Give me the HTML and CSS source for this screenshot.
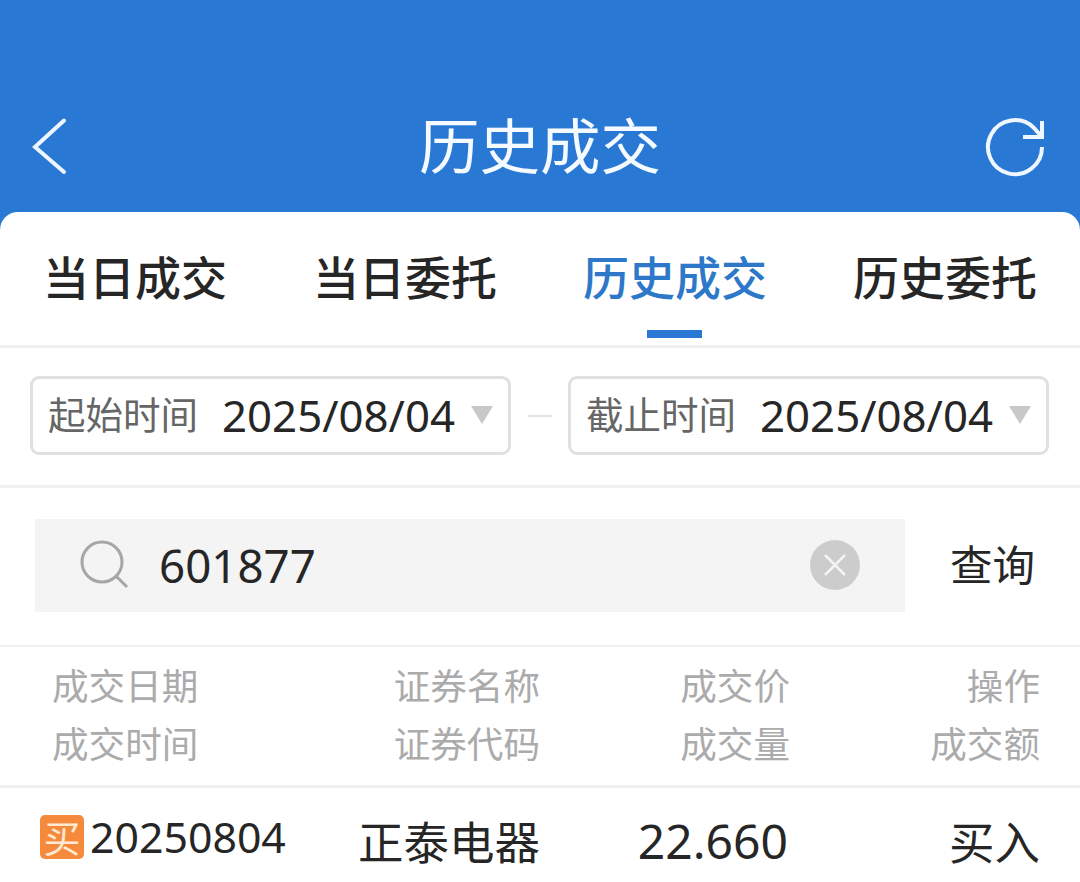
FILE: index.html
```html
<!DOCTYPE html>
<html lang="zh-CN">
<head>
<meta charset="utf-8">
<title>历史成交</title>
<link rel="stylesheet" href="styles.css">
</head>
<body>
<div class="page">
  <header class="topbar">
    <svg class="top-icon" viewBox="0 0 60 60"><path d="M34 3.500 L5 30 L34 55" fill="none" stroke="#eef6ff" stroke-width="4" stroke-linecap="round"/></svg>
    <h1 class="title">历史成交</h1>
    <svg class="top-icon" viewBox="0 0 60 60"><path d="M57 30 A27 27 0 1 1 48.500 10.500 L57 20" fill="none" stroke="#eef6ff" stroke-width="4"/><path d="M57 4 V20 H38" fill="none" stroke="#eef6ff" stroke-width="4"/></svg>
  </header>
  <main class="card">
    <nav class="tabs">
      <div class="tab"><span class="tab-label">当日成交</span></div>
      <div class="tab"><span class="tab-label">当日委托</span></div>
      <div class="tab active"><span class="tab-label">历史成交</span><span class="tab-bar"></span></div>
      <div class="tab"><span class="tab-label">历史委托</span></div>
    </nav>
    <section class="dates">
      <div class="date-box"><span class="date-label">起始时间</span><span class="date-value">2025/08/04</span><span class="caret"></span></div>
      <span class="dash"></span>
      <div class="date-box"><span class="date-label">截止时间</span><span class="date-value">2025/08/04</span><span class="caret"></span></div>
    </section>
    <section class="search">
      <div class="search-box">
        <svg class="search-icon" viewBox="0 0 50 50"><circle cx="22" cy="22" r="20" fill="none" stroke="#a6a6a6" stroke-width="3"/><path d="M36 36 L47 47" stroke="#a6a6a6" stroke-width="3"/></svg>
        <span class="search-text">601877</span>
        <svg class="clear-icon" viewBox="0 0 50 50"><circle cx="25" cy="25" r="25" fill="#cccccc"/><path d="M15 15 L35 35 M35 15 L15 35" stroke="#f4f4f4" stroke-width="2.500"/></svg>
      </div>
      <span class="query">查询</span>
    </section>
    <section class="head-row">
      <div class="cell first">成交日期<br>成交时间</div>
      <div class="cell">证券名称<br>证券代码</div>
      <div class="cell">成交价<br>成交量</div>
      <div class="cell">操作<br>成交额</div>
    </section>
    <section class="data-row">
      <div class="date-cell"><span class="badge">买</span><span class="trade-date">20250804</span></div>
      <div class="value">正泰电器</div>
      <div class="value num">22.660</div>
      <div class="value">买入</div>
    </section>
  </main>
</div>
</body>
</html>
```

FILE: styles.css
```css
* { box-sizing: border-box; }
html, body { margin: 0; padding: 0; }
body {
  background: #2878d4;
  font-family: "Noto Sans", "Noto Sans CJK SC", sans-serif;
  color: #262626;
  overflow: hidden;
}
.page { width: 1080px; height: 882px; display: flex; flex-direction: column; overflow: hidden; }
.topbar {
  height: 212px;
  flex: none;
  padding: 97px 35px 0 30px;
  display: flex;
  justify-content: space-between;
  align-items: flex-start;
}
.top-icon { width: 60px; height: 60px; margin-top: 20px; flex: none; }
.title {
  margin: 0 0 0 5px;
  font-family: "Noto Sans CJK SC", sans-serif;
  font-size: 60.500px;
  line-height: 92px;
  font-weight: 400;
  color: #f4faff;
}
.card { flex: 1; background: #fff; border-radius: 18px 18px 0 0; display: flex; flex-direction: column; }
.tabs {
  height: 136px;
  flex: none;
  display: grid;
  grid-template-columns: repeat(4, 270px);
  border-bottom: 3px solid #f0f0f0;
}
.tab { display: flex; flex-direction: column; align-items: center; padding-top: 32px; }
.tab-label {
  font-family: "Noto Sans CJK SC", sans-serif;
  font-size: 46px;
  line-height: 62px;
  font-weight: 500;
  color: #262626;
}
.active .tab-label { color: #2d78c8; }
.tab-bar { width: 55px; height: 8px; margin: 24px 1px 0 0; background: #2878d4; }
.dates {
  height: 140px;
  flex: none;
  padding: 28px 31px 0 30px;
  display: flex;
  align-items: flex-start;
  border-bottom: 3px solid #f0f0f0;
}
.date-box {
  width: 481px;
  height: 79px;
  flex: none;
  border: 3px solid #e0e0e0;
  border-radius: 9px;
  padding: 0 15px;
  display: flex;
  align-items: center;
}
.date-label {
  font-family: "Noto Sans CJK SC", sans-serif;
  font-size: 37.500px;
  line-height: 50px;
  margin-top: -5px;
  color: #666;
  width: 174px;
  flex: none;
}
.date-value { font-size: 43.800px; line-height: 60px; margin-top: -1px; color: #262626; flex: none; width: 233px; white-space: nowrap; }
.caret {
  width: 0; height: 0; margin: -2px 0 0 16px;
  border-left: 11px solid transparent;
  border-right: 11px solid transparent;
  border-top: 18px solid #c8c8c8;
}
.dash { width: 24px; height: 2px; margin: 39px 16px 0 17px; background: #e2e2e2; flex: none; }
.search {
  height: 159px;
  flex: none;
  padding: 31px 0 0 35px;
  display: flex;
  align-items: flex-start;
  border-bottom: 2px solid #f0f0f0;
}
.search-box {
  width: 870px;
  height: 93px;
  flex: none;
  background: #f4f4f4;
  padding: 0 45px 2px;
  display: flex;
  align-items: center;
}
.search-icon { width: 50px; height: 50px; flex: none; }
.search-text { font-size: 45.700px; line-height: 60px; margin-left: 29px; flex: 1; color: #262626; }
.clear-icon { width: 50px; height: 50px; flex: none; }
.query {
  font-family: "Noto Sans CJK SC", sans-serif;
  font-size: 42.500px;
  line-height: 88px;
  margin-left: 45px;
  color: #262626;
}
.head-row, .data-row {
  flex: none;
  padding: 0 40px;
  display: grid;
  grid-template-columns: repeat(4, 250px);
}
.head-row { height: 141px; padding-top: 9px; border-bottom: 3px solid #f0f0f0; }
.cell {
  font-family: "Noto Sans CJK SC", sans-serif;
  font-size: 36.600px;
  line-height: 58px;
  color: #ababab;
  text-align: right;
}
.cell.first { text-align: left; padding-left: 12px; }
.data-row { padding-top: 27px; }
.date-cell { display: flex; align-items: flex-start; }
.badge {
  width: 44px;
  height: 44px;
  flex: none;
  background: #f58a3c;
  border-radius: 5px;
  color: #ffe9d2;
  font-family: "Noto Sans CJK SC", sans-serif;
  font-size: 37px;
  line-height: 44px;
  text-align: center;
}
.trade-date { font-size: 42.800px; line-height: 46px; margin-left: 6px; margin-top: -1px; color: #262626; }
.value {
  font-family: "Noto Sans CJK SC", sans-serif;
  font-size: 45.500px;
  line-height: 60px;
  margin-top: -5px;
  text-align: right;
  color: #262626;
}
.value.num { font-family: "Noto Sans", sans-serif; font-size: 48px; padding-right: 2px; margin-top: -4px; }
```
